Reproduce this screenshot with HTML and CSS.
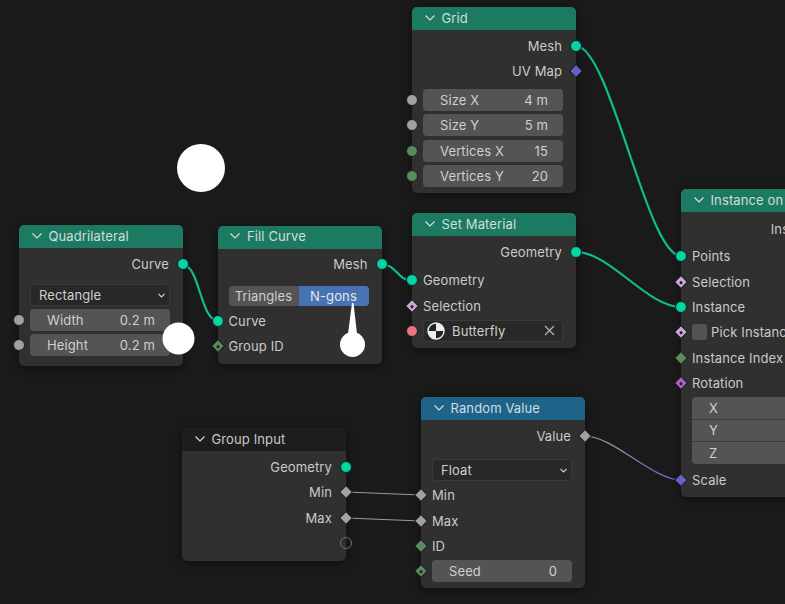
FILE: index.html
```html
<!DOCTYPE html>
<html lang="en">
<head>
    <meta charset="UTF-8">
    <title>Geometry Nodes</title>
    <link rel="stylesheet" href="styles.css">
</head>
<body>
    <div class="canvas">
        <svg class="wires" width="785" height="604" viewBox="0 0 785 604">
            <defs>
                <linearGradient id="scale-wire" gradientUnits="userSpaceOnUse" x1="585" y1="436" x2="681" y2="480">
                    <stop offset="0" stop-color="#a1a1a1"/>
                    <stop offset="1" stop-color="#6363c7"/>
                </linearGradient>
            </defs>
            <path class="wire" d="M183 264C200 268 200 317 217 321"/>
            <path class="wire" d="M382 264C396 265 398 280 412 281"/>
            <path class="wire" d="M576 46C610 46 647 256 681 256"/>
            <path class="wire" d="M576 252C610 252 647 307 681 307"/>
            <path class="wire-thin" stroke="#9a9a9a" d="M346 492C372 493 395 494 421 495"/>
            <path class="wire-thin" stroke="#9a9a9a" d="M346 518C372 519 395 520 421 521"/>
            <path class="wire-thin" stroke="url(#scale-wire)" d="M585 436C613 436 653 480 681 480"/>
        </svg>

        <div class="node node-quad">
            <div class="node-head"><svg class="chev" width="10" height="6" viewBox="0 0 10 6"><path d="M.5.5 5 5 9.5.5"/></svg>Quadrilateral</div>
            <div class="node-body pad-3">
                <div class="row out">Curve<i class="socket geo"></i></div>
                <div class="row gap-6"><div class="select">Rectangle<svg class="select-chev" width="7" height="5" viewBox="0 0 7 5"><path d="M.5.8 3.5 4 6.5.8"/></svg></div></div>
                <div class="row tight"><i class="socket float in"></i><div class="field"><span>Width</span><span>0.2 m</span></div></div>
                <div class="row"><i class="socket float in"></i><div class="field"><span>Height</span><span>0.2 m</span></div></div>
            </div>
        </div>

        <div class="node node-fill">
            <div class="node-head"><svg class="chev" width="10" height="6" viewBox="0 0 10 6"><path d="M.5.5 5 5 9.5.5"/></svg>Fill Curve</div>
            <div class="node-body pad-3">
                <div class="row out">Mesh<i class="socket geo"></i></div>
                <div class="row gap-6"><div class="toggle"><span>Triangles</span><span class="on">N-gons</span></div></div>
                <div class="row tight"><i class="socket geo in"></i>Curve</div>
                <div class="row"><i class="socket dia int dot in"></i>Group ID</div>
            </div>
        </div>

        <div class="node node-grid">
            <div class="node-head"><svg class="chev" width="10" height="6" viewBox="0 0 10 6"><path d="M.5.5 5 5 9.5.5"/></svg>Grid</div>
            <div class="node-body pad-3">
                <div class="row out">Mesh<i class="socket geo"></i></div>
                <div class="row out">UV Map<i class="socket dia vec"></i></div>
                <div class="row gap-4"><i class="socket float in"></i><div class="field"><span>Size X</span><span>4 m</span></div></div>
                <div class="row"><i class="socket float in"></i><div class="field"><span>Size Y</span><span>5 m</span></div></div>
                <div class="row"><i class="socket int in"></i><div class="field"><span>Vertices X</span><span>15</span></div></div>
                <div class="row"><i class="socket int in"></i><div class="field"><span>Vertices Y</span><span>20</span></div></div>
            </div>
        </div>

        <div class="node node-material">
            <div class="node-head"><svg class="chev" width="10" height="6" viewBox="0 0 10 6"><path d="M.5.5 5 5 9.5.5"/></svg>Set Material</div>
            <div class="node-body pad-3">
                <div class="row out">Geometry<i class="socket geo"></i></div>
                <div class="row gap-3"><i class="socket geo in"></i>Geometry</div>
                <div class="row"><i class="socket dia bool dot in"></i>Selection</div>
                <div class="row"><i class="socket mat in"></i>
                    <div class="select picker">
                        <svg class="mat-icon" width="18" height="18" viewBox="0 0 18 18"><circle cx="9" cy="9" r="8" fill="#222" stroke="#eee" stroke-width="1.4"/><path d="M9 9V1a8 8 0 0 1 8 8zM9 9H1a8 8 0 0 0 8 8z" fill="#eee"/></svg>
                        <span class="picker-name">Butterfly</span>
                        <svg class="picker-x" width="11" height="11" viewBox="0 0 11 11"><path d="M1 1 10 10M10 1 1 10"/></svg>
                    </div>
                </div>
            </div>
        </div>

        <div class="node node-instance">
            <div class="node-head"><svg class="chev" width="10" height="6" viewBox="0 0 10 6"><path d="M.5.5 5 5 9.5.5"/></svg>Instance on Points</div>
            <div class="node-body pad-4">
                <div class="row out">Instances<i class="socket geo"></i></div>
                <div class="row gap-2"><i class="socket geo in"></i>Points</div>
                <div class="row"><i class="socket dia bool dot in"></i>Selection</div>
                <div class="row"><i class="socket geo in"></i>Instance</div>
                <div class="row"><i class="socket dia bool dot in"></i><b class="check"></b>Pick Instance</div>
                <div class="row"><i class="socket dia int in"></i>Instance Index</div>
                <div class="row"><i class="socket dia rot dot in"></i>Rotation</div>
                <div class="vector">
                    <div class="vector-cell">X</div>
                    <div class="vector-cell">Y</div>
                    <div class="vector-cell">Z</div>
                </div>
                <div class="row"><i class="socket dia vec in"></i>Scale</div>
            </div>
        </div>

        <div class="node node-group">
            <div class="node-head head-dark"><svg class="chev" width="10" height="6" viewBox="0 0 10 6"><path d="M.5.5 5 5 9.5.5"/></svg>Group Input</div>
            <div class="node-body pad-3">
                <div class="row out">Geometry<i class="socket geo"></i></div>
                <div class="row out">Min<i class="socket dia float"></i></div>
                <div class="row out">Max<i class="socket dia float"></i></div>
                <div class="row out"><i class="socket empty"></i></div>
            </div>
        </div>

        <div class="node node-random">
            <div class="node-head head-blue"><svg class="chev" width="10" height="6" viewBox="0 0 10 6"><path d="M.5.5 5 5 9.5.5"/></svg>Random Value</div>
            <div class="node-body pad-3">
                <div class="row out">Value<i class="socket dia float"></i></div>
                <div class="row gap-8"><div class="select">Float<svg class="select-chev" width="7" height="5" viewBox="0 0 7 5"><path d="M.5.8 3.5 4 6.5.8"/></svg></div></div>
                <div class="row"><i class="socket dia float in"></i>Min</div>
                <div class="row"><i class="socket dia float in"></i>Max</div>
                <div class="row"><i class="socket dia int in"></i>ID</div>
                <div class="row"><i class="socket dia int dot in"></i><div class="field"><span>Seed</span><span>0</span></div></div>
            </div>
        </div>

        <svg class="marks" width="785" height="604" viewBox="0 0 785 604">
            <circle cx="201" cy="168" r="24"/>
            <circle cx="178.500" cy="338.500" r="16"/>
            <circle cx="352.500" cy="344.500" r="12.500"/>
            <path d="M352 303h1.500L357 334H348z"/>
        </svg>
    </div>
</body>
</html>
```

FILE: styles.css
```css
* {
    margin: 0;
    padding: 0;
    box-sizing: border-box;
}

body {
    background-color: #1a1a1a;
    font-family: Inter, "Noto Sans", sans-serif;
    font-size: 13px;
    letter-spacing: 0.12px;
    color: #cacaca;
    overflow: hidden;
}

.canvas {
    position: relative;
    width: 785px;
    height: 604px;
    overflow: hidden;
}

.wires,
.marks {
    position: absolute;
    left: 0;
    top: 0;
}

.marks {
    fill: #fff;
}

.wire {
    fill: none;
    stroke: #10bd90;
    stroke-width: 2.2;
}

.wire-thin {
    fill: none;
    stroke-width: 1.2;
}

/* nodes sit on a free canvas */
.node {
    position: absolute;
    width: 164px;
    background-color: #303030;
    border-radius: 5px;
    box-shadow: 0 2px 9px rgba(0, 0, 0, 0.45);
}

.node-quad { left: 19px; top: 225px; height: 141px; }
.node-fill { left: 217.5px; top: 225.500px; height: 138.500px; }
.node-grid { left: 412px; top: 7px; height: 186px; }
.node-material { left: 412px; top: 213px; height: 135px; }
.node-instance { left: 681px; top: 189px; height: 308px; }
.node-group { left: 182px; top: 428px; height: 133px; }
.node-random { left: 421px; top: 397px; height: 191px; }

.node-head {
    display: flex;
    align-items: center;
    height: 23px;
    padding: 0 0 2px 12.5px;
    background-color: #1d7a62;
    border-radius: 5px 5px 0 0;
    color: #cfdeda;
    white-space: nowrap;
}

.head-dark {
    background-color: #1d1d1d;
    color: #c8c8c8;
}

.head-blue {
    background-color: #1f6488;
    color: #cfdce4;
}

.chev {
    margin-right: 7px;
    fill: none;
    stroke: #d8e4e0;
    stroke-width: 1.1;
}

.pad-3 { padding-top: 3.3px; }
.pad-4 { padding-top: 4.3px; }

.row {
    position: relative;
    display: flex;
    align-items: center;
    height: 25.33px;
    padding: 0 13px 0 11px;
    white-space: nowrap;
}

.row.out {
    justify-content: flex-end;
    padding-right: 14px;
}

.gap-2 { margin-top: 2.2px; }
.gap-3 { margin-top: 3px; }
.gap-4 { margin-top: 3.5px; }
.gap-6 { margin-top: 6.2px; }
.gap-8 { margin-top: 8.7px; }
.tight { margin-top: -0.8px; }

/* sockets */
.socket {
    position: absolute;
    top: 50%;
    right: -6px;
    width: 12px;
    height: 12px;
    margin-top: -6px;
    border-radius: 50%;
    border: 1px solid #1c1c1c;
}

.socket.in {
    right: auto;
    left: -6px;
}

.socket.dia {
    width: 10px;
    height: 10px;
    margin-top: -5px;
    right: -5px;
    border-radius: 1px;
    transform: rotate(45deg);
}

.socket.dia.in {
    right: auto;
    left: -5px;
}

.socket.dia.dot::after {
    content: "";
    position: absolute;
    left: 2.5px;
    top: 2.5px;
    width: 3px;
    height: 3px;
    border-radius: 50%;
    background-color: #1f1f1f;
}

.geo { background-color: #00d6a3; }
.float { background-color: #a1a1a1; }
.int { background-color: #598c5c; }
.vec { background-color: #6363c7; }
.bool { background-color: #cca6d6; }
.rot { background-color: #a663c7; }
.mat { background-color: #eb7582; }

.socket.empty {
    background: none;
    border-color: #6e6e6e;
}

/* fields */
.field {
    display: flex;
    justify-content: space-between;
    align-items: center;
    flex: 1;
    height: 22px;
    padding: 0 15px 0 17px;
    background-color: #545454;
    border-radius: 4px;
    color: #cfcfcf;
}

.select {
    position: relative;
    display: flex;
    align-items: center;
    flex: 1;
    height: 22px;
    padding-left: 8px;
    background-color: #282828;
    border: 1px solid #3a3a3a;
    border-radius: 4px;
    color: #cfcfcf;
}

.select-chev {
    position: absolute;
    right: 4px;
    top: 8px;
    fill: none;
    stroke: #d4d4d4;
    stroke-width: 1.1;
}

.picker {
    padding-left: 3px;
}

.picker-name {
    margin-left: 7px;
}

.picker-x {
    margin-left: auto;
    margin-right: 7px;
    fill: none;
    stroke: #bdbdbd;
    stroke-width: 1.1;
}

.toggle {
    display: flex;
    flex: 1;
    height: 20px;
    border-radius: 4px;
    overflow: hidden;
    text-align: center;
    line-height: 20px;
    background-color: #545454;
    color: #cfcfcf;
}

.toggle span {
    flex: 1;
}

.toggle .on {
    background-color: #4772b3;
    color: #e6e6e6;
}

.check {
    width: 15px;
    height: 16px;
    margin-right: 4px;
    background-color: #545454;
    border-radius: 3px;
}

.vector {
    margin: 1.5px 13px 3px 11px;
    border-radius: 4px;
    overflow: hidden;
}

.vector-cell {
    display: flex;
    align-items: center;
    height: 22.3px;
    padding-left: 17px;
    background-color: #545454;
    border-bottom: 1px solid #3a3a3a;
    color: #cfcfcf;
}

.vector-cell:last-child {
    border-bottom: none;
}
```
